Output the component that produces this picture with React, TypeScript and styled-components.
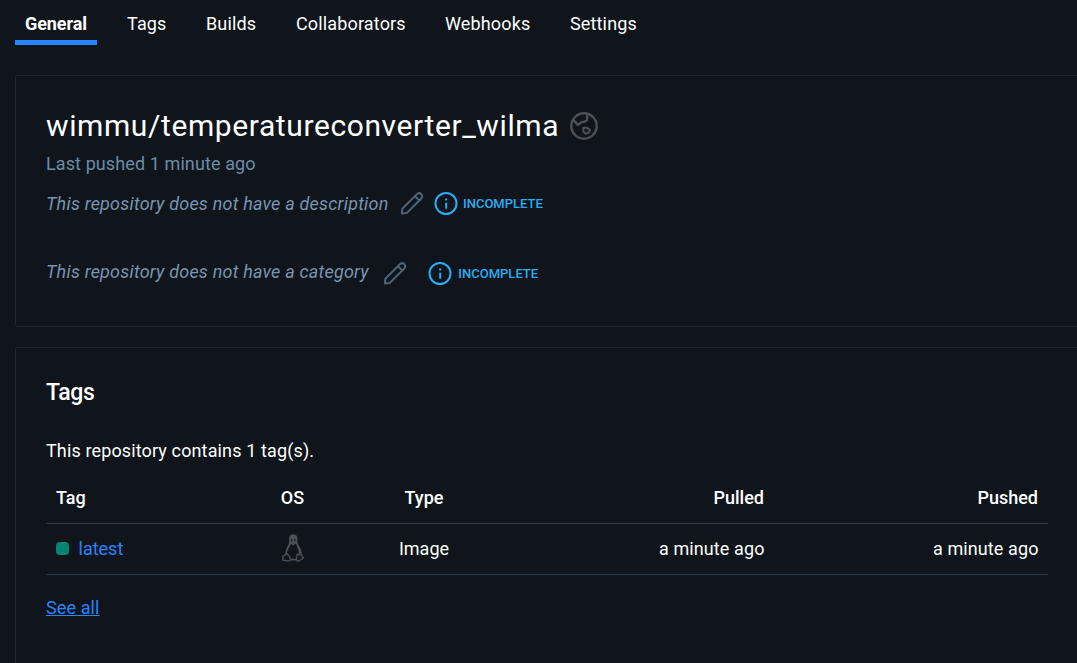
import React from "react";
import styled, { createGlobalStyle } from "styled-components";

const GlobalStyle = createGlobalStyle`
  * { box-sizing: border-box; }
  html, body { margin: 0; padding: 0; background: #10151b; overflow: hidden; }
  body { font-family: Roboto, "Liberation Sans", sans-serif; font-size: 18px; color: #fff; }
`;

const Page = styled.div`
  height: 663px;
  padding-left: 15px;
  overflow: hidden;
  display: flex;
  flex-direction: column;
`;

const TabBar = styled.nav`
  display: flex;
  gap: 20px;
  height: 45px;
  flex: none;
  margin-bottom: 30px;
`;

const Tab = styled.a<{ $active?: boolean; $width: number }>`
  width: ${(p) => p.$width}px;
  padding: 3px 10px 0;
  line-height: 42px;
  height: 45px;
  white-space: nowrap;
  font-weight: ${(p) => (p.$active ? 700 : 400)};
  letter-spacing: ${(p) => (p.$active ? "-0.08px" : "0.15px")};
  border-bottom: 5px solid ${(p) => (p.$active ? "#2684ff" : "transparent")};
`;

const Card = styled.section<{ $height: number }>`
  flex: none;
  height: ${(p) => p.$height}px;
  width: 1080px;
  margin-bottom: 20px;
  padding: 30px;
  border: 1px solid #20272e;
  border-radius: 3px;
`;

const TitleRow = styled.div`
  display: flex;
  align-items: center;
  gap: 11px;
  height: 40px;
`;

const Title = styled.h1`
  margin: 0;
  font-size: 30px;
  font-weight: 400;
  line-height: 40px;
  letter-spacing: 0.6px;
`;

const Pushed = styled.div`
  margin-top: 6px;
  line-height: 24px;
  letter-spacing: 0.1px;
  color: #6c8ba7;
`;

const MetaRow = styled.div<{ $top: number; $gap: number }>`
  display: flex;
  align-items: center;
  height: 24px;
  margin-top: ${(p) => p.$top}px;
  gap: ${(p) => p.$gap}px;
`;

const Placeholder = styled.span<{ $top?: number; $bottom?: number }>`
  font-style: italic;
  color: #7794b1;
  line-height: 24px;
  letter-spacing: 0.2px;
  padding-top: ${(p) => p.$top ?? 0}px;
  padding-bottom: ${(p) => p.$bottom ?? 0}px;
`;

const Status = styled.span<{ $left: number; $gap: number }>`
  display: flex;
  align-items: center;
  gap: ${(p) => p.$gap}px;
  margin-left: ${(p) => p.$left}px;
  color: #27adf5;
  font-size: 13px;
  font-weight: 500;
`;

const Icon = styled.svg`
  display: block;
  flex: none;
  fill: none;
  stroke: currentColor;
  stroke-linecap: round;
  stroke-linejoin: round;
`;

const MutedIcon = styled(Icon)`
  color: #4d5054;
`;

const PencilIcon = styled(Icon)`
  color: #4c6478;
`;

const SectionTitle = styled.h2`
  margin: 0;
  font-size: 23px;
  font-weight: 500;
  line-height: 30px;
  letter-spacing: -0.3px;
`;

const Intro = styled.p`
  margin: 31px 0 9px;
  line-height: 24px;
  letter-spacing: 0.13px;
`;

const Row = styled.div<{ $head?: boolean }>`
  display: grid;
  grid-template-columns: 181px 131px 132px 284px 274px;
  align-items: center;
  width: 1002px;
  height: ${(p) => (p.$head ? 52 : 51)}px;
  padding-bottom: ${(p) => (p.$head ? 1 : 2)}px;
  border-bottom: 1px solid #2b3d48;
  font-weight: ${(p) => (p.$head ? 500 : 400)};
`;

const Cell = styled.div<{ $align?: string }>`
  display: flex;
  align-items: center;
  justify-content: ${(p) => p.$align ?? "flex-start"};
  height: 28px;
  padding: 0 10px;
`;

const TimeCell = styled(Cell)`
  letter-spacing: 0.1px;
  padding-right: 9.5px;
`;

const Dot = styled.span`
  width: 13px;
  height: 13px;
  margin-right: 9.5px;
  border-radius: 4px;
  background: #058471;
`;

const TagLink = styled.a`
  color: #2684ff;
`;

const SeeAll = styled.a`
  display: inline-block;
  margin-top: 21px;
  line-height: 24px;
  letter-spacing: 0.1px;
  color: #2684ff;
  text-decoration: underline;
`;

const Globe = () => (
  <MutedIcon width="28" height="28" viewBox="0 0 28 28" strokeWidth="2.4">
    <circle cx="14" cy="14" r="12.7" />
    <path d="M3.6 8.2 L8 12.8 L11.5 10.2 L14.5 9.6 L16.9 8.2 L17.3 3.2" />
    <path d="M13.4 15.8 L17 15.8 L20 18 L18.6 20.8 L15.8 21.8 L13.4 19.6 Z" strokeWidth="2.1" />
  </MutedIcon>
);

const Pencil = () => (
  <PencilIcon width="24" height="24" viewBox="0 -0.4 24 24" strokeWidth="2">
    <path d="M1.9 22.1 L2.3 17.4 L16.7 3 C18 1.6 19.9 1.5 21.2 2.7 C22.4 4 22.4 5.9 21 7.3 L6.6 21.7 Z" />
    <path d="M15 4.8 L19.2 9" />
  </PencilIcon>
);

const Info = () => (
  <Icon width="24" height="24" viewBox="0 -0.5 24 24" strokeWidth="2">
    <circle cx="12" cy="12" r="10.5" />
    <path d="M12.2 11.2 V17.2" strokeLinecap="butt" />
    <path d="M12.2 7 V9" strokeLinecap="butt" />
  </Icon>
);

const Tux = () => (
  <MutedIcon width="22" height="28" viewBox="0 0 22 28" strokeWidth="1.3">
    <path
      d="M11.3 .2 C8.6 .2 7.1 2 7.1 4.4 C7.1 7.3 7.6 8.7 6.2 11 C4.8 13.2 3.4 16 3.3 20.2 L5 21.2 C4.8 17.5 6 15.2 7.4 13.1 L8.8 10 L11 11.4 L14 9.6 C14.8 13.2 17.2 15.4 16.7 20 L19.6 19.8 C19.8 16.5 18.3 13.7 16.6 11.2 C14.8 8.5 15.5 7.1 15.4 4.3 C15.3 1.7 13.9 .2 11.3 .2 Z"
      fill="currentColor"
      stroke="none"
    />
    <path d="M9.6 5.4 V7 M12.9 5.4 V7" stroke="#191e23" strokeWidth="1.2" />
    <path d="M3.6 19.6 L2.9 21.4 L.8 22 L1.1 24.1 L.7 26 L6.4 27.2 L8.6 25.7 L7.6 22.7 L5 19.5 Z" />
    <path d="M15.1 20.2 L14.8 23.4 L14.4 26.3 L16.4 27.3 L19 25.5 L21.4 24 L20 22.2 L19.4 19.8 L17.5 21 Z" />
    <path d="M8.7 25.6 H14.2" strokeWidth="1.8" />
  </MutedIcon>
);

const tabs = [
  { label: "General", width: 82, active: true },
  { label: "Tags", width: 59 },
  { label: "Builds", width: 70 },
  { label: "Collaborators", width: 129 },
  { label: "Webhooks", width: 105 },
  { label: "Settings", width: 87 },
];

export default function App() {
  return (
    <>
      <GlobalStyle />
      <Page>
        <TabBar>
          {tabs.map((t) => (
            <Tab key={t.label} $active={t.active} $width={t.width}>
              {t.label}
            </Tab>
          ))}
        </TabBar>
        <Card $height={252}>
          <TitleRow>
            <Title>wimmu/temperatureconverter_wilma</Title>
            <Globe />
          </TitleRow>
          <Pushed>Last pushed 1 minute ago</Pushed>
          <MetaRow $top={15} $gap={11}>
            <Placeholder $top={2}>This repository does not have a description</Placeholder>
            <Pencil />
            <Status $left={-1} $gap={5.5}>
              <Info />
              INCOMPLETE
            </Status>
          </MetaRow>
          <MetaRow $top={46} $gap={14.5}>
            <Placeholder $bottom={2}>This repository does not have a category</Placeholder>
            <Pencil />
            <Status $left={6.5} $gap={6}>
              <Info />
              INCOMPLETE
            </Status>
          </MetaRow>
        </Card>
        <Card $height={340}>
          <SectionTitle>Tags</SectionTitle>
          <Intro>This repository contains 1 tag(s).</Intro>
          <Row $head>
            <Cell>Tag</Cell>
            <Cell $align="center">OS</Cell>
            <Cell $align="center">Type</Cell>
            <Cell $align="flex-end">Pulled</Cell>
            <Cell $align="flex-end">Pushed</Cell>
          </Row>
          <Row>
            <Cell>
              <Dot />
              <TagLink>latest</TagLink>
            </Cell>
            <Cell $align="center">
              <Tux />
            </Cell>
            <Cell $align="center">Image</Cell>
            <TimeCell $align="flex-end">a minute ago</TimeCell>
            <TimeCell $align="flex-end">a minute ago</TimeCell>
          </Row>
          <SeeAll>See all</SeeAll>
        </Card>
      </Page>
    </>
  );
}
